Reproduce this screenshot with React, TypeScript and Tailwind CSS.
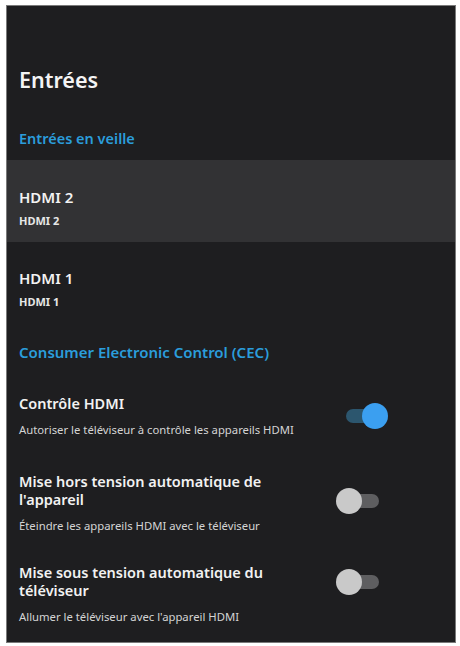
import React, { useState } from "react";

interface ToggleProps {
  on: boolean;
  onChange: () => void;
}

function Toggle({ on, onChange }: ToggleProps) {
  return (
    <button
      type="button"
      onClick={onChange}
      className="relative w-[33px] h-[14px] shrink-0"
    >
      <span
        className={
          on
            ? "absolute inset-0 rounded-full bg-[#2c566e]"
            : "absolute inset-0 rounded-full bg-[#5e5e60]"
        }
      />
      <span
        className={
          on
            ? "absolute top-[-6px] left-[16px] size-[26px] rounded-full bg-[#3b9ff0]"
            : "absolute top-[-6px] left-[-10px] size-[26px] rounded-full bg-[#c9c9c9]"
        }
      />
    </button>
  );
}

interface SwitchRowProps {
  title: string;
  subtitle: string;
  on: boolean;
  onChange: () => void;
  className: string;
  toggleClass: string;
}

function SwitchRow({ title, subtitle, on, onChange, className, toggleClass }: SwitchRowProps) {
  return (
    <div className={`flex items-start pl-[12px] pr-[76px] ${className}`}>
      <div className="w-[300px]">
        <p className="text-[14.5px] leading-[18px] font-semibold text-[#f2f2f2]">
          {title}
        </p>
        <p className="mt-[11px] text-[11.3px] leading-[14px] text-[#d4d4d4]">
          {subtitle}
        </p>
      </div>
      <div className={`ml-auto ${toggleClass}`}>
        <Toggle on={on} onChange={onChange} />
      </div>
    </div>
  );
}

export default function App() {
  const [cec, setCec] = useState(true);
  const [autoOff, setAutoOff] = useState(false);
  const [autoOn, setAutoOn] = useState(false);

  return (
    <div className="w-[460px] h-[646px] bg-white pt-[5px] pl-[6px] font-['Noto_Sans',sans-serif]">
      <div className="w-[450px] h-[638px] bg-[#1e1e20] border border-[#7a7a7a] flex flex-col overflow-hidden">
        <h1 className="pt-[60px] pl-[12px] text-[21.5px] leading-[28px] font-semibold text-[#f4f4f4]">
          Entrées
        </h1>
        <h2 className="mt-[34px] pl-[12px] text-[14.5px] leading-[20px] font-semibold text-[#2b9ddb]">
          Entrées en veille
        </h2>

        {/* entrées */}
        <div className="mt-[12px] h-[82px] bg-[#323234] pl-[12px] pt-[26px]">
          <p className="text-[15px] leading-[22px] font-semibold text-[#f2f2f2]">HDMI 2</p>
          <p className="mt-[6px] text-[11px] leading-[14px] font-bold text-[#e6e6e6]">HDMI 2</p>
        </div>
        <div className="h-[82px] pl-[12px] pt-[25px]">
          <p className="text-[15px] leading-[22px] font-semibold text-[#f2f2f2]">HDMI 1</p>
          <p className="mt-[6px] text-[11px] leading-[14px] font-bold text-[#e6e6e6]">HDMI 1</p>
        </div>

        <h2 className="mt-[18px] pl-[12px] text-[15px] leading-[20px] font-semibold text-[#2b9ddb]">
          Consumer Electronic Control (CEC)
        </h2>

        <SwitchRow
          className="mt-[32px]"
          toggleClass="mt-[11px]"
          title="Contrôle HDMI"
          subtitle="Autoriser le téléviseur à contrôle les appareils HDMI"
          on={cec}
          onChange={() => setCec(!cec)}
        />
        <SwitchRow
          className="mt-[35px]"
          toggleClass="mt-[18px]"
          title="Mise hors tension automatique de l'appareil"
          subtitle="Éteindre les appareils HDMI avec le téléviseur"
          on={autoOff}
          onChange={() => setAutoOff(!autoOff)}
        />
        <SwitchRow
          className="mt-[30px]"
          toggleClass="mt-[8px]"
          title="Mise sous tension automatique du téléviseur"
          subtitle="Allumer le téléviseur avec l'appareil HDMI"
          on={autoOn}
          onChange={() => setAutoOn(!autoOn)}
        />
      </div>
    </div>
  );
}
